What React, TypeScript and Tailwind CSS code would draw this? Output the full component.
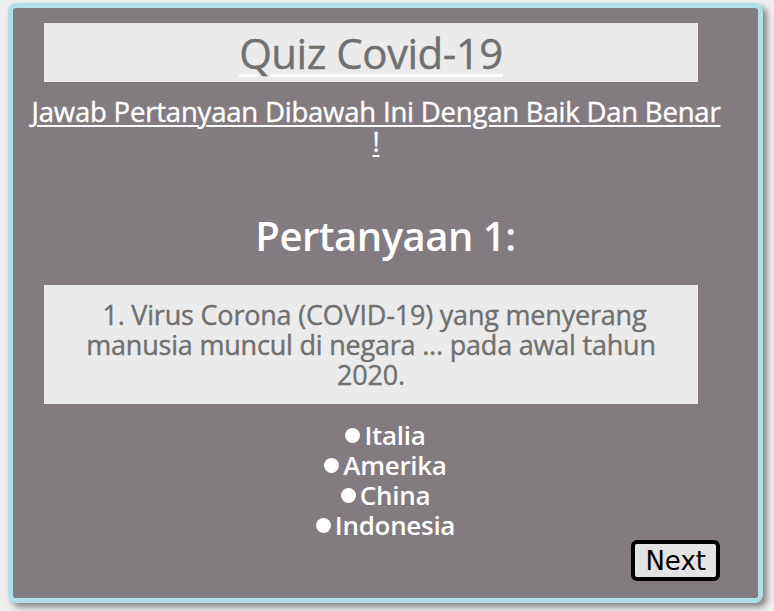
const options = ["Italia", "Amerika", "China", "Indonesia"];

const App = () => {
  return (
    <div className="min-h-[611px] w-[774px] bg-[#efefef] pt-[3px] pl-[8px]">
      <div
        className="w-[755px] h-[600px] rounded-lg border-[5px] border-[#b0e0e6] bg-[#827b7f] shadow-[4px_4px_6px_rgba(0,0,0,0.45)] pt-[15px]"
        style={{ fontFamily: '"Open Sans", sans-serif' }}
      >
        <div className="ml-[31px] w-[654px] h-[59px] bg-[#ebebeb] flex items-center justify-center">
          <h1 className="text-[42px] leading-none tracking-[-0.5px] text-[#707070] [-webkit-text-stroke:0.4px_#707070] underline decoration-white decoration-[3px] underline-offset-[5px]">
            Quiz Covid-19
          </h1>
        </div>

        <p className="mt-[15px] ml-[18px] w-[690px] text-center text-[27.5px] leading-[30px] tracking-[-0.2px] text-white [-webkit-text-stroke:0.4px_white] underline decoration-[2px] underline-offset-[3px]">
          Jawab Pertanyaan Dibawah Ini Dengan Baik Dan Benar
          <br />!
        </p>

        <h2 className="mt-[56px] text-center text-[40px] leading-[46px] font-semibold tracking-[-0.5px] text-white">
          Pertanyaan 1:
        </h2>

        <div className="mt-[26px] ml-[31px] w-[654px] h-[119px] bg-[#ebebeb] flex items-center justify-center px-[20px]">
          <p className="text-center text-[27px] leading-[30px] tracking-[-0.2px] text-[#707070] [-webkit-text-stroke:0.4px_#707070]">
            &nbsp;1. Virus Corona (COVID-19) yang menyerang manusia muncul di negara ... pada awal tahun 2020.
          </p>
        </div>

        <ul className="mt-[16px] flex flex-col items-center">
          {options.map((o) => (
            <li key={o} className="flex items-center gap-[4px] text-[26px] leading-[30px] font-semibold tracking-[-0.3px] text-white">
              <span className="inline-block w-[15px] h-[15px] rounded-full bg-white" />
              {o}
            </li>
          ))}
        </ul>

        <div className="flex justify-end pr-[38px]">
          <button
            className="h-[41px] px-[10px] rounded-[6px] border-[4px] border-black bg-[#e3e3e3] text-[26px] leading-none text-black"
            style={{ fontFamily: '"DejaVu Sans", sans-serif' }}
          >
            Next
          </button>
        </div>
      </div>
    </div>
  );
};

export default App;
